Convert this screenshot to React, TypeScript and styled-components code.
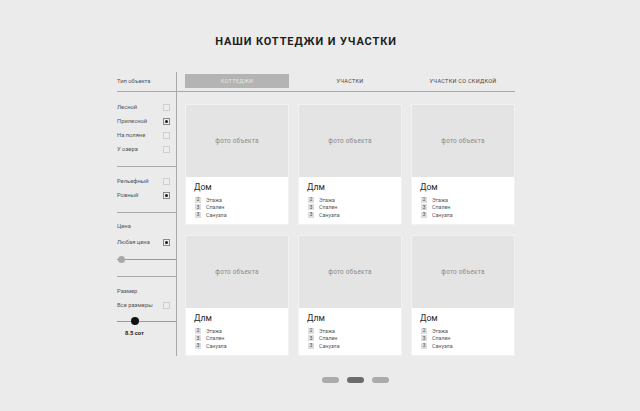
import React from "react";
import styled, { createGlobalStyle } from "styled-components";

const Global = createGlobalStyle`
  html, body { margin: 0; padding: 0; background: #ebebeb; }
  body { font-family: Roboto, "Liberation Sans", sans-serif; color: #333; }
  * { box-sizing: border-box; }
`;

const Page = styled.div`
  width: 640px;
  height: 411px;
  padding-left: 117px;
  background: #ebebeb;
  overflow: hidden;
`;

const Title = styled.h1`
  width: 398px;
  height: 72px;
  margin: 0;
  padding: 35px 20px 0 0;
  font-size: 11px;
  line-height: 14px;
  font-weight: 700;
  letter-spacing: 0.9px;
  text-align: center;
  color: #1d1d1d;
`;

const Layout = styled.div`
  display: grid;
  grid-template-columns: 60px 338px;
  grid-template-rows: 20px auto auto;
`;

const SideHead = styled.div`
  border-right: 1px solid #a9a9a9;
  border-bottom: 1px solid #a9a9a9;
  font-size: 5.8px;
  line-height: 19px;
  color: #555;
`;

const Tabs = styled.div`
  display: grid;
  grid-template-columns: repeat(3, 104px);
  column-gap: 9px;
  padding: 2px 0 0 8px;
  border-bottom: 1px solid #a9a9a9;
`;

const Tab = styled.div<{ $active?: boolean }>`
  height: 14px;
  display: flex;
  align-items: center;
  justify-content: center;
  font-size: 5.5px;
  letter-spacing: 0.3px;
  text-transform: uppercase;
  color: ${(p) => (p.$active ? "#e6e6e6" : "#444")};
  background: ${(p) => (p.$active ? "#b4b4b4" : "transparent")};
`;

const Sidebar = styled.div`
  border-right: 1px solid #a9a9a9;
`;

const Section = styled.div<{ $pt: number; $last?: boolean }>`
  padding-top: ${(p) => p.$pt}px;
  padding-bottom: ${(p) => (p.$last ? 0 : 10)}px;
  border-bottom: ${(p) => (p.$last ? "none" : "1px solid #a9a9a9")};
`;

const Label = styled.div`
  height: 14px;
  line-height: 14px;
  font-size: 5.8px;
  color: #555;
`;

const Option = styled.div<{ $mt?: number }>`
  height: 14px;
  margin-top: ${(p) => p.$mt ?? 0}px;
  display: flex;
  align-items: center;
  justify-content: space-between;
  padding-right: 6px;
  font-size: 5.8px;
  color: #555;
`;

const Check = styled.span<{ $on?: boolean }>`
  width: 7px;
  height: 7px;
  border: 1px solid ${(p) => (p.$on ? "#8a8a8a" : "#cfcfcf")};
  display: flex;
  align-items: center;
  justify-content: center;
  background: #ededed;
  &::after {
    content: "";
    width: 3px;
    height: 3px;
    border-radius: 50%;
    background: ${(p) => (p.$on ? "#1a1a1a" : "transparent")};
  }
`;

const Slider = styled.div<{ $mt?: number }>`
  position: relative;
  height: 14px;
  margin-top: ${(p) => p.$mt ?? 0}px;
  &::before {
    content: "";
    position: absolute;
    left: 0;
    right: 0;
    top: 7px;
    height: 1px;
    background: #9a9a9a;
  }
`;

const Knob = styled.span<{ $dark?: boolean }>`
  position: absolute;
  top: ${(p) => (p.$dark ? 3 : 3.5)}px;
  width: ${(p) => (p.$dark ? 8 : 7)}px;
  height: ${(p) => (p.$dark ? 8 : 7)}px;
  border-radius: 50%;
  background: ${(p) => (p.$dark ? "#111" : "#a8a8a8")};
`;

const Value = styled.div`
  height: 10px;
  line-height: 10px;
  padding-left: 8px;
  font-size: 5.8px;
  font-weight: 700;
  color: #222;
`;

const Main = styled.div`
  padding: 12px 0 0 8px;
`;

const Cards = styled.div`
  display: grid;
  grid-template-columns: repeat(3, 104px);
  column-gap: 9px;
  row-gap: 10px;
`;

const Card = styled.div`
  height: 121px;
  display: flex;
  flex-direction: column;
  border: 1px solid #f1f1f1;
  background: #fff;
`;

const Photo = styled.div`
  height: 72px;
  display: flex;
  align-items: center;
  justify-content: center;
  background: #e4e4e4;
  font-size: 6.4px;
  color: #8a8a8a;
  letter-spacing: 0.2px;
`;

const Info = styled.div`
  flex: 1;
  padding: 4px 0 0 8px;
`;

const Name = styled.div`
  font-size: 8.6px;
  line-height: 12px;
  color: #2a2a2a;
`;

const Specs = styled.ul`
  margin: 3px 0 0 1px;
  padding: 0;
  list-style: none;
`;

const Spec = styled.li`
  height: 7.5px;
  display: flex;
  align-items: center;
  gap: 5px;
  font-size: 5.3px;
  color: #555;
`;

const Num = styled.span`
  width: 6px;
  height: 6px;
  display: flex;
  align-items: center;
  justify-content: center;
  background: #dedede;
  font-size: 4.6px;
  color: #444;
`;

const Pager = styled.div`
  grid-column: 2;
  display: flex;
  justify-content: center;
  gap: 8px;
  padding: 21px 0 0 18px;
`;

const Dot = styled.span<{ $active?: boolean }>`
  width: 17px;
  height: 6px;
  border-radius: 3px;
  background: ${(p) => (p.$active ? "#6b6b6b" : "#ababab")};
`;

const cards = [
  { name: "Дом", specs: ["2", "3", "3"] },
  { name: "Длм", specs: ["2", "3", "3"] },
  { name: "Дом", specs: ["2", "3", "3"] },
  { name: "Длм", specs: ["2", "3", "3"] },
  { name: "Длм", specs: ["2", "3", "3"] },
  { name: "Дом", specs: ["2", "3", "3"] },
];

const specLabels = ["Этажа", "Спален", "Санузла"];

export default function App() {
  return (
    <>
      <Global />
      <Page>
        <Title>НАШИ КОТТЕДЖИ И УЧАСТКИ</Title>
        <Layout>
          <SideHead>Тип объекта</SideHead>
          <Tabs>
            <Tab $active>Коттеджи</Tab>
            <Tab>Участки</Tab>
            <Tab>Участки со скидкой</Tab>
          </Tabs>
          <Sidebar>
            <Section $pt={8}>
              <Option>Лесной<Check /></Option>
              <Option>Прилесной<Check $on /></Option>
              <Option>На поляне<Check /></Option>
              <Option>У озера<Check /></Option>
            </Section>
            <Section $pt={7}>
              <Option>Рельефный<Check /></Option>
              <Option>Ровный<Check $on /></Option>
            </Section>
            <Section $pt={6}>
              <Label>Цена</Label>
              <Option $mt={2}>Любая цена<Check $on /></Option>
              <Slider $mt={3}>
                <Knob style={{ left: 1 }} />
              </Slider>
            </Section>
            <Section $pt={7} $last>
              <Label>Размер</Label>
              <Option>Все размеры<Check /></Option>
              <Slider $mt={2}>
                <Knob $dark style={{ left: 14 }} />
              </Slider>
              <Value>8.5 сот</Value>
            </Section>
          </Sidebar>
          <Main>
            <Cards>
              {cards.map((c, i) => (
                <Card key={i}>
                  <Photo>фото объекта</Photo>
                  <Info>
                    <Name>{c.name}</Name>
                    <Specs>
                      {c.specs.map((n, j) => (
                        <Spec key={j}>
                          <Num>{n}</Num>
                          {specLabels[j]}
                        </Spec>
                      ))}
                    </Specs>
                  </Info>
                </Card>
              ))}
            </Cards>
          </Main>
          <Pager>
            <Dot />
            <Dot $active />
            <Dot />
          </Pager>
        </Layout>
      </Page>
    </>
  );
}
